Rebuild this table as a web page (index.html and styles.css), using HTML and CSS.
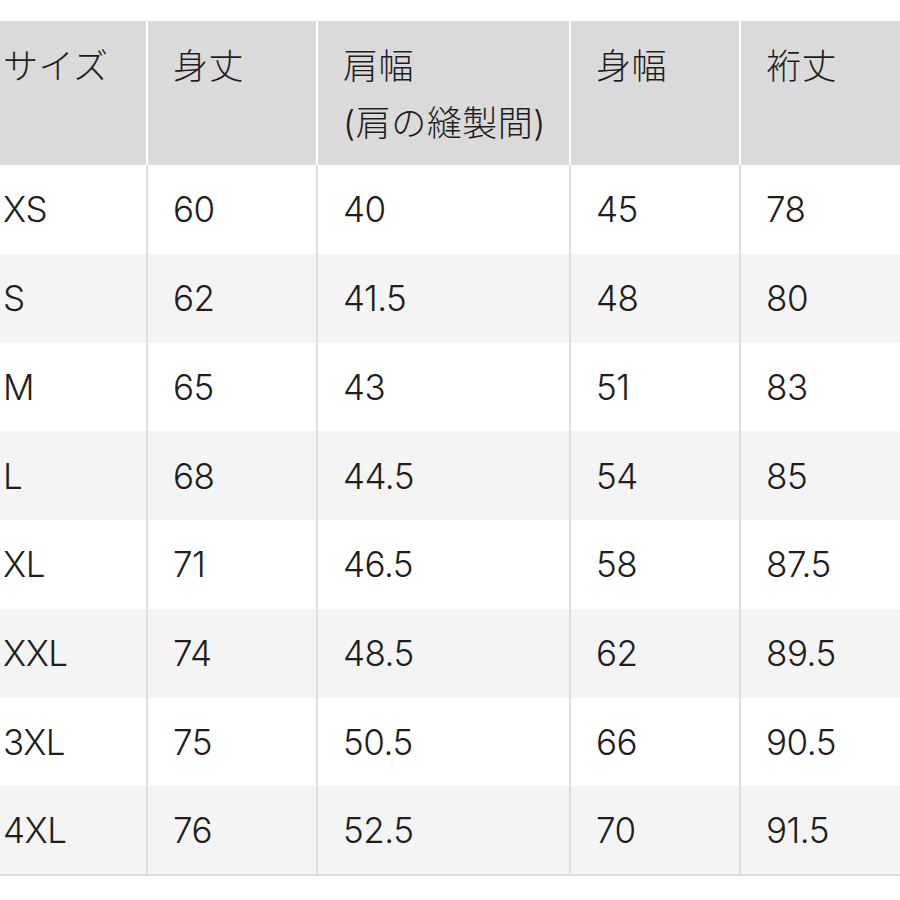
FILE: index.html
```html
<!DOCTYPE html>
<html lang="ja">
<head>
<meta charset="utf-8">
<link rel="stylesheet" href="styles.css">
</head>
<body>
<table class="size-table">
  <colgroup>
    <col class="c1"><col class="c2"><col class="c3"><col class="c4"><col class="c5">
  </colgroup>
  <thead>
    <tr>
      <th>サイズ</th>
      <th>身丈</th>
      <th>肩幅<br>(肩の縫製間)</th>
      <th>身幅</th>
      <th>裄丈</th>
    </tr>
  </thead>
  <tbody>
    <tr><td>XS</td><td>60</td><td>40</td><td>45</td><td>78</td></tr>
    <tr><td>S</td><td>62</td><td>41.5</td><td>48</td><td>80</td></tr>
    <tr><td>M</td><td>65</td><td>43</td><td>51</td><td>83</td></tr>
    <tr><td>L</td><td>68</td><td>44.5</td><td>54</td><td>85</td></tr>
    <tr><td>XL</td><td>71</td><td>46.5</td><td>58</td><td>87.5</td></tr>
    <tr><td>XXL</td><td>74</td><td>48.5</td><td>62</td><td>89.5</td></tr>
    <tr><td>3XL</td><td>75</td><td>50.5</td><td>66</td><td>90.5</td></tr>
    <tr><td>4XL</td><td>76</td><td>52.5</td><td>70</td><td>91.5</td></tr>
  </tbody>
</table>
</body>
</html>
```
FILE: styles.css
```css
html, body {
  margin: 0;
  padding: 0;
  background: #ffffff;
  overflow: hidden;
}
body {
  width: 900px;
  height: 900px;
}
.size-table {
  margin-top: 21px;
  margin-left: -22px;
  width: 932px;
  border-collapse: collapse;
  table-layout: fixed;
  font-family: "Inter", "Noto Sans CJK JP", sans-serif;
  font-weight: 300;
  font-size: 35px;
  letter-spacing: -0.5px;
  color: #1e1e1e;
}
.c1 { width: 169px; }
.c2 { width: 170px; }
.c3 { width: 253px; }
.c4 { width: 170px; }
.c5 { width: 170px; }
.size-table th,
.size-table td {
  padding: 0 0 0 25px;
  text-align: left;
  font-weight: 300;
  white-space: nowrap;
}
.size-table th {
  background: #dadada;
  height: 144px;
  box-sizing: border-box;
  vertical-align: top;
  padding-top: 17px;
  line-height: 57px;
  letter-spacing: 0.5px;
  border-left: 2px solid #ffffff;
}
.size-table td {
  height: 88.75px;
  box-sizing: border-box;
  vertical-align: middle;
  line-height: 40px;
  border-left: 2px solid #dedede;
}
.size-table th:first-child,
.size-table td:first-child {
  border-left: none;
}
.size-table tbody tr:nth-child(even) td {
  background: #f4f4f4;
}
.size-table tbody tr:last-child td {
  border-bottom: 2px solid #dcdcdc;
}
```
